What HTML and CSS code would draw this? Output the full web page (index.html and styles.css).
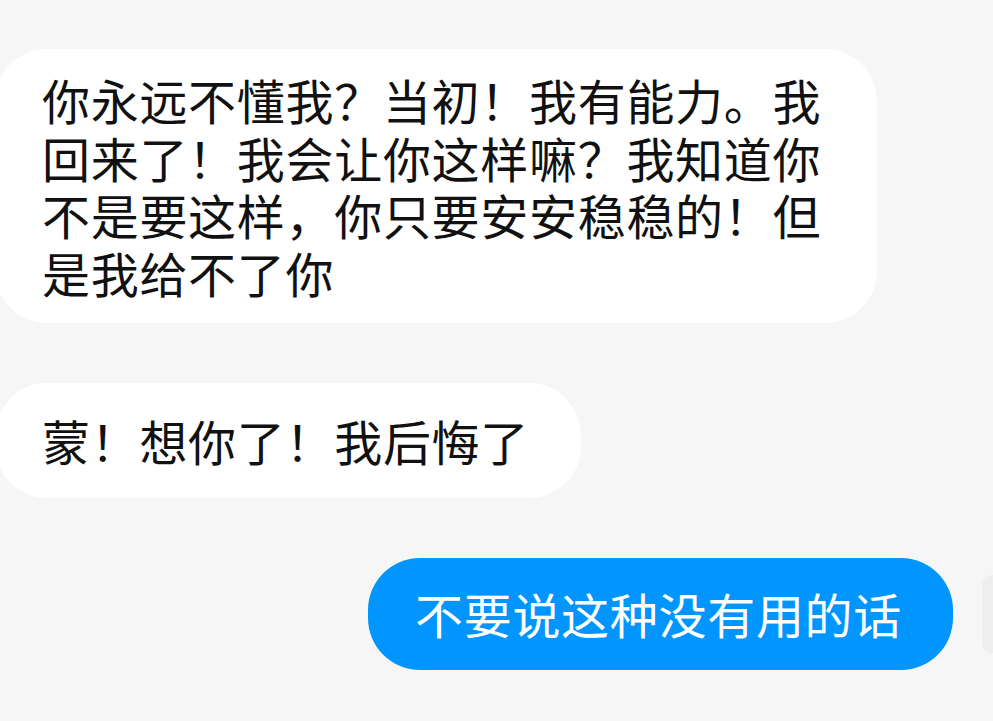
FILE: index.html
```html
<!DOCTYPE html>
<html lang="zh-CN">
<head>
<meta charset="utf-8">
<title>Chat</title>
<link rel="stylesheet" href="styles.css">
</head>
<body>
<main class="chat">
  <div class="row row-in">
    <div class="bubble bubble-in">你永远不懂我？当初！我有能力。我回来了！我会让你这样嘛？我知道你不是要这样，你只要安安稳稳的！但是我给不了你</div>
  </div>
  <div class="row row-in">
    <div class="bubble bubble-in">蒙！想你了！我后悔了</div>
  </div>
  <div class="row row-out">
    <div class="bubble bubble-out">不要说这种没有用的话</div>
    <div class="avatar"></div>
  </div>
</main>
</body>
</html>
```
FILE: styles.css
```css
html, body {
  margin: 0;
  padding: 0;
  background: #f6f6f6;
  overflow: hidden;
}
body {
  width: 993px;
  height: 721px;
  font-family: "Noto Sans CJK SC", "Noto Sans", sans-serif;
}
.chat {
  display: flex;
  flex-direction: column;
  gap: 60px;
  padding-top: 49px;
}
.row {
  display: flex;
  align-items: center;
}
.row-in {
  justify-content: flex-start;
  margin-left: -5px;
}
.row-out {
  justify-content: flex-end;
  gap: 29px;
}
.bubble {
  box-sizing: border-box;
  min-height: 115px;
  display: flex;
  align-items: center;
  padding: 22px 52px 22px 47px;
  border-radius: 52px;
  font-size: 48px;
  letter-spacing: 0.7px;
  line-height: 57.5px;
}
.bubble-in {
  background: #ffffff;
  color: #111111;
  max-width: 882px;
}
.bubble-out {
  background: #0095ff;
  color: #ffffff;
  min-height: 112px;
  padding-left: 47px;
  padding-right: 51px;
}
.avatar {
  flex-shrink: 0;
  width: 11px;
  height: 78px;
  border-radius: 24px 0 0 24px;
  background: #eeeeee;
}
```
